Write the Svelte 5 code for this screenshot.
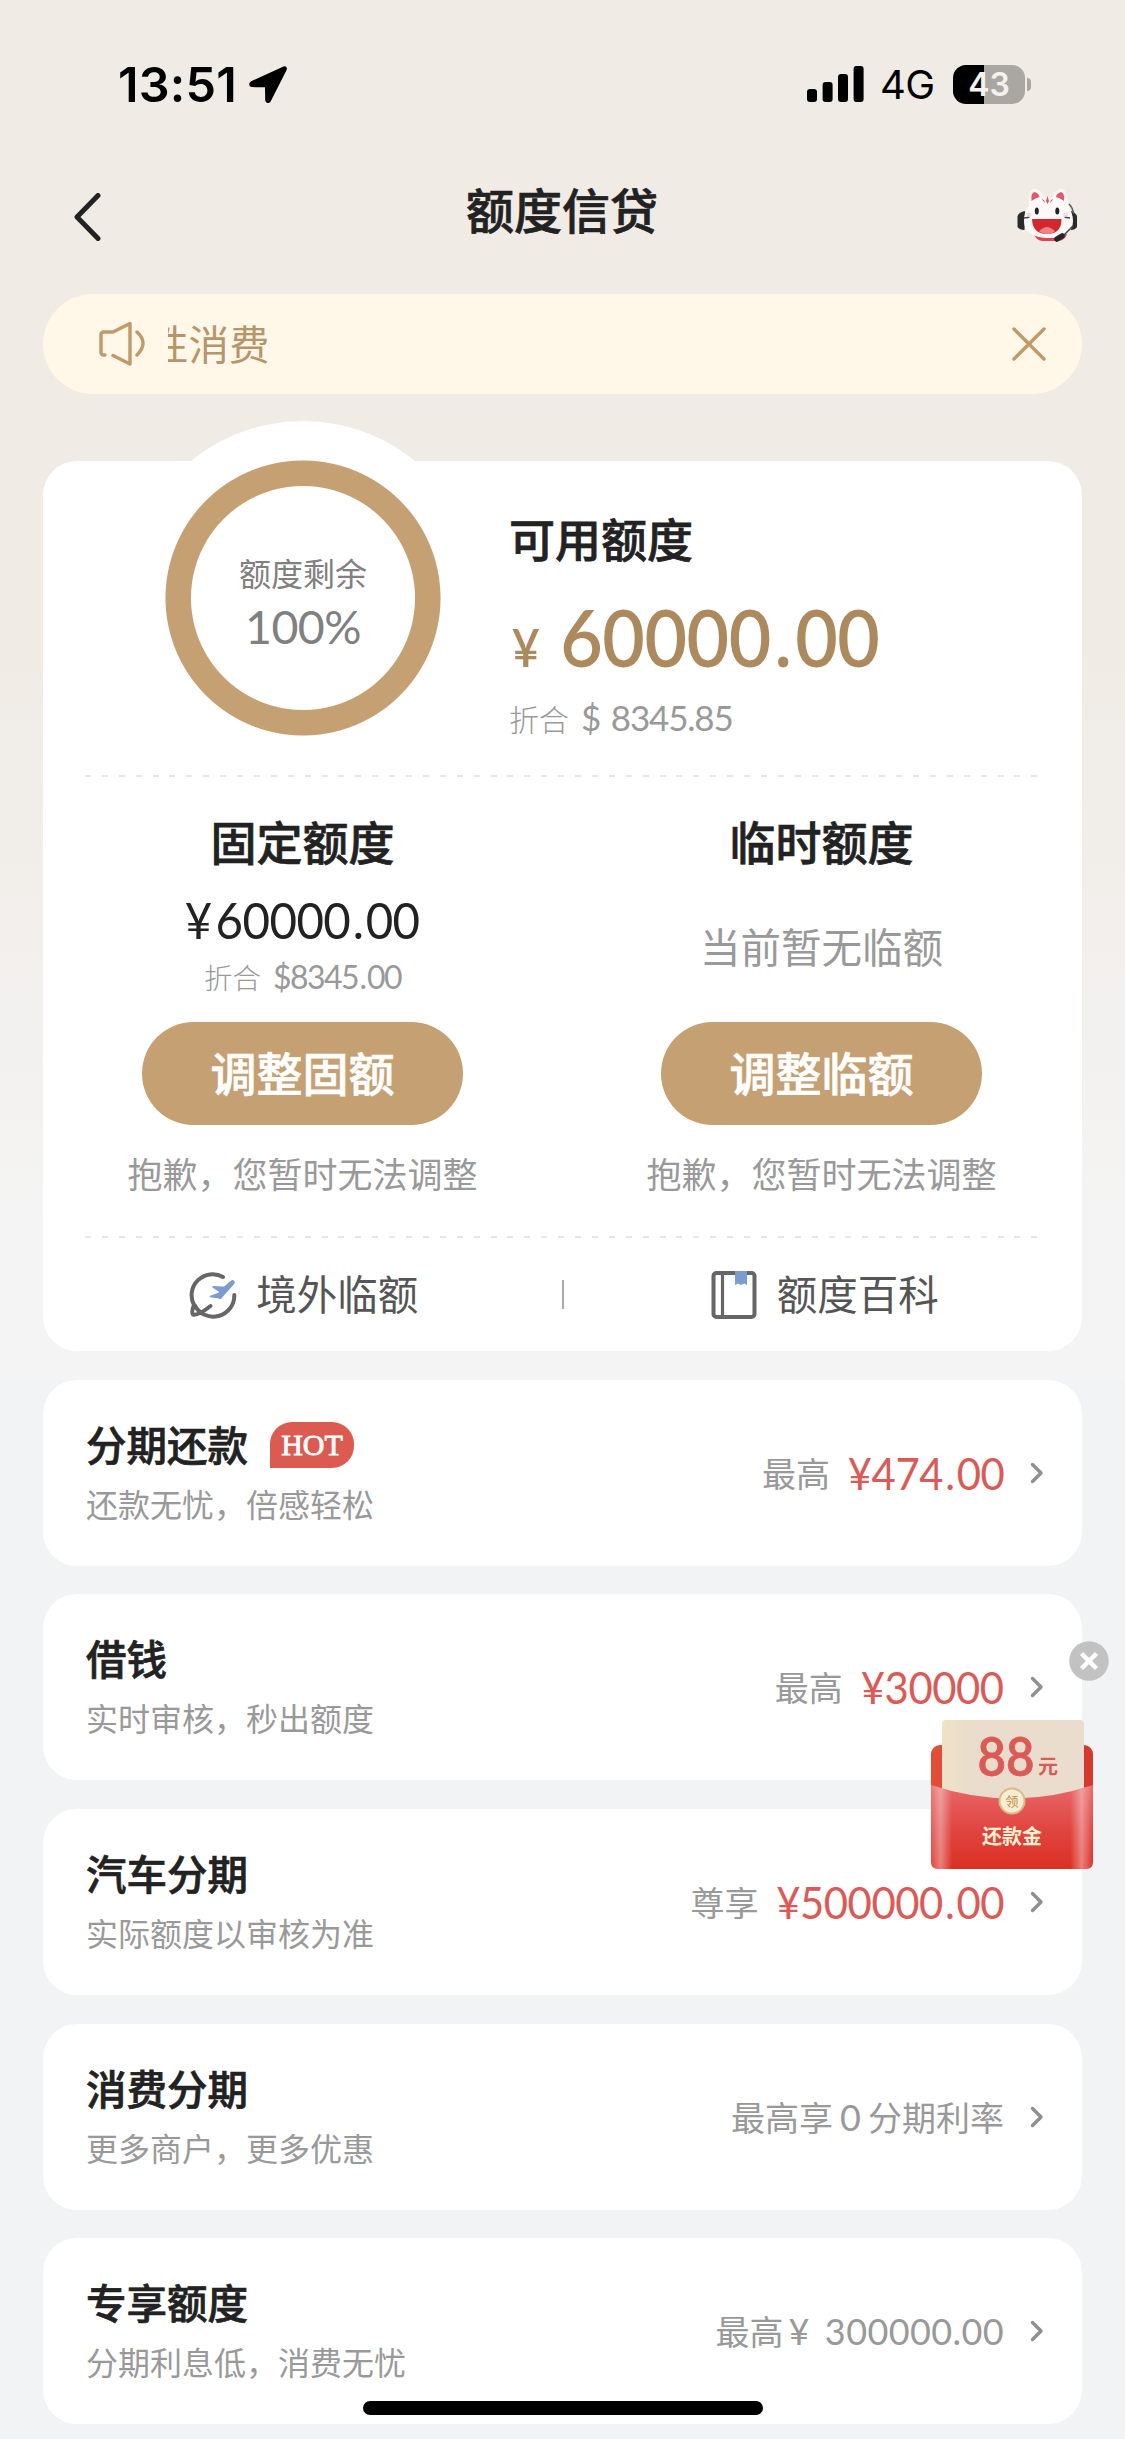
<script>
  const products = [
    { title: '分期还款', note: '还款无忧，倍感轻松', lead: '最高', amount: '¥474.00', hot: true },
    { title: '借钱', note: '实时审核，秒出额度', lead: '最高', amount: '¥30000' },
    { title: '汽车分期', note: '实际额度以审核为准', lead: '尊享', amount: '¥500000.00' },
    { title: '消费分期', note: '更多商户，更多优惠', rate: '0' },
    { title: '专享额度', note: '分期利息低，消费无忧', plain: '300000.00' }
  ];
  // Condensed figures keep their full layout width, so longer amounts need a smaller gap.
  const gapFor = (amount) => 18 - 1.75 * amount.length;
</script>

{#snippet figure(text)}
  {#each [...text] as ch}<span class={ch === '.' ? 'dot' : ch === '¥' ? 'yen' : ''}>{ch}</span>{/each}
{/snippet}

<div class="page">
  <div class="status">
    <span class="time">13:51</span>
    <svg class="locate" viewBox="0 0 38 37"><path d="M34.500.6 2.200 15.200C-.8 16.800-.4 21 3 21.100l13 .2.2 12.800c.1 3.400 4.300 3.800 5.700.8L37.600 4C38.600 1.500 36.800-.4 34.500.6Z" /></svg>
    <span class="grow"></span>
    <svg class="signal" viewBox="0 0 57 36">
      <rect x="0" y="23" width="10" height="13" rx="3" />
      <rect x="15.600" y="16" width="10" height="20" rx="3" />
      <rect x="31" y="8" width="10" height="28" rx="3" />
      <rect x="46.600" y="0" width="10" height="36" rx="3" />
    </svg>
    <span class="net">4G</span>
    <div class="battery">43</div>
    <i class="nub"></i>
  </div>

  <header>
    <svg class="back" viewBox="0 0 28 48"><path d="M25 2.500 4 24 25 45.500" /></svg>
    <h1>额度信贷</h1>
    <svg class="mascot" viewBox="0 0 60 56">
      <path d="M17 46h33q-2 6-8 7H25q-6-1-8-7Z" fill="#dd4556" />
      <path d="M8 23Q2 24 .5 28v11q2 3 7 3Z" fill="#2b2b2e" />
      <path d="M54 23q4 1 6 5v11q-2 3-6 3Z" fill="#2b2b2e" />
      <path d="M52 16q4 4 4.500 10" fill="none" stroke="#55555a" stroke-width="1.500" />
      <path d="M12 17Q11 1 18 1q6 1 9 8h9q2-7 8-8 6 0 7 17 5 7 5 15c0 11-9 17-23.500 17S7 45 7 33q0-9 5-16Z" fill="#fdf9f8" />
      <path d="M14.500 13q-1-8 3-9 4 1 5 5-4 1-8 4Zm32.500 0q1-8-3-9-5 2-5 5 4 1 8 4Z" fill="#e8566a" />
      <path d="m30.500 8 1.500 5-1.500 3-1.500-3Zm-6 3 2.500 1 1 3Zm12 0-2.500 1-1 3Z" fill="#e35064" />
      <ellipse cx="19.800" cy="23" rx="2" ry="3.600" fill="#222" /><ellipse cx="40.300" cy="23" rx="2" ry="3.600" fill="#222" />
      <circle cx="12" cy="27" r="2.300" fill="#ffd3d8" /><circle cx="48.500" cy="27" r="2.300" fill="#ffd3d8" />
      <path d="M15 31h29.500q0 15-14.500 15T15 31Z" fill="#d2282d" />
      <path d="M22 43.500q8-9 16 0-8 5-16 0Z" fill="#ef8187" />
      <path d="M7 30q5-1 5 0M53 30q-5-1-5 0M56 38 46 48" fill="none" stroke="#44444a" stroke-width="1.500" />
      <path d="m40 51 5-3" stroke="#242428" stroke-width="5.500" stroke-linecap="round" />
    </svg>
  </header>

  <div class="notice">
    <svg class="horn" viewBox="0 0 47 44"><path d="M6 33H4.500A2.500 2.500 0 0 1 2 30.500V12.500A2.500 2.500 0 0 1 4.500 10H14L31 1.500V42L14 33.500M38 10q12 11 0 23" /></svg>
    <div class="ticker"><span>性消费</span></div>
    <svg class="shut" viewBox="0 0 34 34"><path d="m2 2 30 30M32 2 2 32" /></svg>
  </div>

  <main class="quota">
    <section class="top">
      <div class="ring"><span class="left">额度剩余</span><span class="pct">100%</span></div>
      <div class="avail">
        <h2>可用额度</h2>
        <div class="big"><span class="sign">¥</span>{@render figure('60000.00')}</div>
        <div class="usd"><span class="cn">折合</span>$ 8345.85</div>
      </div>
    </section>
    <div class="dash"></div>
    <section class="cols">
      <div class="col">
        <h2>固定额度</h2>
        <div class="mid">{@render figure('¥60000.00')}</div>
        <div class="usd small"><span class="cn">折合</span><span class="num">{@render figure('$8345.00')}</span></div>
        <button>调整固额</button>
        <p>抱歉，您暂时无法调整</p>
      </div>
      <div class="col">
        <h2>临时额度</h2>
        <div class="none">当前暂无临额</div>
        <button>调整临额</button>
        <p>抱歉，您暂时无法调整</p>
      </div>
    </section>
    <div class="dash"></div>
    <section class="links">
      <div class="link">
        <svg viewBox="0 0 48 50">
          <path d="M34 7A21 21 0 0 0 5 35Q2 42 4 44.500 9 46 21.500 36M5.500 35A21 21 0 0 0 45.300 25" fill="none" stroke="#666" stroke-width="4" stroke-linecap="round" stroke-linejoin="round" />
          <path d="M43.500 12.500 31 26.500M42 13.500 32 23" fill="none" stroke="#7b9ccc" stroke-width="4.600" stroke-linecap="round" />
          <path d="M24 16.800 38 17.500 32 22.500ZM21.500 26.500 31 23l1 5Z" fill="#7b9ccc" stroke="#7b9ccc" stroke-width="1.500" stroke-linejoin="round" />
        </svg>
        <span>境外临额</span>
      </div>
      <i></i>
      <div class="link">
        <svg viewBox="0 0 48 50">
          <rect x="3.500" y="3" width="41" height="44" rx="3" fill="none" stroke="#666" stroke-width="4" /><path d="M12.500 3v44" stroke="#666" stroke-width="3.200" />
          <path d="M25 1h12v14l-3-1.500-3 1.500-3-1.500-3 1.500Z" fill="#7b9ccc" />
        </svg>
        <span>额度百科</span>
      </div>
    </section>
  </main>

  {#each products as p}
    <section class="product">
      <div class="info">
        <h3>{p.title}{#if p.hot}<span class="hot">HOT</span>{/if}</h3>
        <div class="note">{p.note}</div>
      </div>
      {#if p.amount}
        <div class="worth" style:gap="{gapFor(p.amount)}px"><span class="lead">{p.lead}</span><span class="amount">{@render figure(p.amount)}</span></div>
      {:else if p.rate}
        <span class="lead rate">最高享<b>{p.rate}</b>分期利率</span>
      {:else}
        <span class="lead plain">最高<b class="y">¥</b><b>{p.plain}</b></span>
      {/if}
      <svg class="chev" viewBox="0 0 14 22"><path d="m2.500 2.500 8.500 8.500-8.500 8.500" /></svg>
    </section>
  {/each}

  <div class="promo">
    <svg class="x" viewBox="0 0 40 40"><circle cx="20" cy="20" r="19.800" fill="#c2c2c2" /><path d="m12.500 12.500 15 15M27.500 12.500l-15 15" stroke="#fff" stroke-width="4.500" /></svg>
    <svg class="packet" viewBox="0 0 162 150">
      <defs>
        <linearGradient id="pback"><stop offset="0" stop-color="#e24f36" /><stop offset="1" stop-color="#d6372f" /></linearGradient>
        <linearGradient id="ppaper"><stop offset="0" stop-color="#f0e2c8" /><stop offset=".2" stop-color="#eadccb" /><stop offset="1" stop-color="#eaddcf" /></linearGradient>
        <linearGradient id="pfront" x2="0" y2="1"><stop offset="0" stop-color="#e8686a" /><stop offset=".55" stop-color="#e0443f" /><stop offset="1" stop-color="#db3024" /></linearGradient>
        <linearGradient id="pshine"><stop offset="0" stop-color="#fff" stop-opacity=".12" /><stop offset=".06" stop-color="#fff" stop-opacity=".38" /><stop offset=".13" stop-color="#fff" stop-opacity="0" /><stop offset=".86" stop-color="#fff" stop-opacity="0" /><stop offset=".93" stop-color="#fff" stop-opacity=".38" /><stop offset="1" stop-color="#fff" stop-opacity="0" /></linearGradient>
      </defs>
      <rect y="25" width="162" height="80" rx="9" fill="url(#pback)" />
      <rect x="11" width="142" height="92" rx="4" fill="url(#ppaper)" />
      <path d="M0 65q81 27 162 0v77q0 7-7 7H7q-7 0-7-7Z" fill="url(#pfront)" />
      <path d="M0 65q81 27 162 0v77q0 7-7 7H7q-7 0-7-7Z" fill="url(#pshine)" />
      <circle cx="81" cy="81" r="12.500" fill="#f9ecd4" stroke="#dcba83" stroke-width="2" />
      <text x="81" y="86" text-anchor="middle" class="coin">领</text>
      <text x="46.500" y="55.500" class="n88" textLength="57" lengthAdjust="spacingAndGlyphs">88</text>
      <text x="107" y="54" class="yuan">元</text>
      <text x="81" y="123.500" text-anchor="middle" class="cash">还款金</text>
    </svg>
  </div>
  <div class="home"></div>
</div>

<style>
  :global(body) { margin: 0; background: #f2f3f5; }
  .page {
    position: relative; box-sizing: border-box; width: 1125px; height: 2439px; overflow: hidden;
    padding: 0 43px; color: #222;
    background: linear-gradient(#f0ebe5 0, #f0ebe5 650px, #f4f4f4 1230px, #f4f4f4 1380px, #f2f3f5 1380px);
    font-family: "Noto Sans CJK SC", sans-serif;
  }
  h1, h2, h3, p { margin: 0; }
  h1, h2, h3, button { -webkit-text-stroke: .7px currentColor; }
  .status { display: flex; align-items: center; height: 168px; padding: 0 51px 0 75px; font-family: Inter, sans-serif; color: #000; }
  .time { width: 131px; font-size: 48.500px; font-weight: 600; letter-spacing: .2px; }
  .locate { width: 38px; height: 37px; }
  .grow { flex: 1; }
  .signal { width: 57px; height: 36px; margin-right: 16px; }
  .net { width: 73px; font-size: 40px; font-weight: 400; letter-spacing: -.5px; }
  .battery {
    width: 72px; height: 39px; line-height: 39px; border-radius: 13px; text-align: center; color: #f4f1ee;
    font-size: 32px; font-weight: 600; background: linear-gradient(90deg, #000 43%, #aaa6a2 43%);
  }
  .nub { width: 4px; height: 13px; margin-left: 2px; border-radius: 0 4px 4px 0; background: #aaa6a2; }
  header { display: grid; grid-template-columns: 1fr auto 1fr; align-items: center; height: 92px; padding: 4px 5px 0 30px; box-sizing: border-box; }
  .back { width: 28px; height: 48px; margin-top: 2px; }
  .back path { fill: none; stroke: #222; stroke-width: 5; stroke-linecap: round; stroke-linejoin: round; }
  h1 { font-size: 48px; line-height: 60px; font-weight: 500; margin: 0 26px 16px 0; }
  .mascot { width: 60px; height: 56px; justify-self: end; }
  .notice { display: flex; align-items: center; box-sizing: border-box; height: 100px; margin-top: 34px; padding: 0 36px 0 56px; border-radius: 50px; background: #fff7e8; }
  .horn { width: 47px; height: 44px; }
  .horn path, .shut path { fill: none; stroke: #c09a6a; stroke-width: 3.400; stroke-linejoin: round; stroke-linecap: round; }
  .ticker { flex: 1; display: flex; margin-left: 22px; overflow: hidden; color: #b8946a; font-size: 40.500px; line-height: 60px; padding-bottom: 2px; }
  .ticker span { margin-left: -20px; }
  .shut { width: 34px; height: 34px; }
  .quota { height: 890px; margin-top: 67px; border-radius: 34px; background: #fff; }
  .top { display: flex; height: 314px; padding-left: 83px; }
  .ring {
    flex: none; display: flex; flex-direction: column; align-items: center; box-sizing: border-box; width: 354px; height: 354px; margin: -40px 29px 0 0;
    padding-top: 129px; border-radius: 50%; color: #808080;
    background: radial-gradient(circle, #fff 111.500px, #c5a073 112.500px, #c5a073 137px, #fff 138px);
  }
  .left { font-size: 32px; line-height: 44px; }
  .pct { margin-top: 2px; font: 400 46.500px/60px Lato, sans-serif; letter-spacing: -.5px; }
  .avail { padding-top: 43px; }
  h2 { font-size: 46px; line-height: 66px; font-weight: 500; }
  .big { display: flex; align-items: baseline; width: 420px; height: 96px; margin-top: 19px; color: #ad8a5e; font: 600 79px/96px Lato, sans-serif; letter-spacing: -.5px; transform: scaleX(.93); transform-origin: left; }
  .sign { width: 52px; padding-left: 3px; font-size: 52px; }
  .dot { margin: 0 .05em; }
  .usd { display: flex; align-items: baseline; margin-top: 7px; color: #999; font: 400 35px/50px Lato, sans-serif; letter-spacing: -1.200px; word-spacing: 3px; }
  .usd .cn { margin-right: 12px; font: 300 30px/50px "Noto Sans CJK SC", sans-serif; letter-spacing: 0; }
  .dash { height: 2px; margin: 0 44px 0 42px; background: repeating-linear-gradient(90deg, #e6e6e6 0 6px, transparent 6px 16.900px); }
  .cols { display: grid; grid-template-columns: 1fr 1fr; height: 459px; padding-right: 1px; }
  .col { display: flex; flex-direction: column; align-items: center; padding-top: 30px; }
  .mid { display: flex; height: 64px; margin-top: 15px; font: 400 51px/64px Lato, sans-serif; letter-spacing: -.600px; transform: scaleX(.93); }
  .mid .yen { margin-right: 4px; }
  .small { margin-top: 0; font-size: 32px; height: 46px; }
  .small .cn { margin-right: 12px; font-size: 28.500px; }
  .num { letter-spacing: -1.600px; }
  .none { height: 125px; line-height: 145px; color: #999; font-size: 40.500px; }
  button { width: 321px; height: 103px; margin-top: 24px; border: 0; border-radius: 52px; background: #c5a073; color: #fff; font: 500 46px/98px "Noto Sans CJK SC", sans-serif; padding: 0 0 5px; }
  p { margin-top: 22px; color: #999; font-size: 35px; line-height: 52px; }
  .links { display: grid; grid-template-columns: 1fr 2px 1fr; align-items: center; height: 113px; }
  .links i { height: 29px; background: #aaa; }
  .link { display: flex; align-items: center; justify-content: center; gap: 19px; padding-left: 3px; color: #555; font-size: 40.500px; line-height: 60px; }
  .link span { margin-bottom: 4px; }
  .link svg { width: 48px; height: 50px; }
  .product { display: flex; align-items: center; box-sizing: border-box; height: 186px; margin-top: 28.700px; padding: 0 38px 0 43px; border-radius: 34px; background: #fff; }
  .info { flex: 1; }
  h3 { display: flex; align-items: center; font-size: 40.500px; line-height: 60px; font-weight: 500; }
  .hot { width: 84px; height: 46px; margin: 3px 0 0 22px; border-radius: 22px 22px 22px 0; background: #dc5b50; color: #fff; text-align: center; font: 400 30px/46px "Liberation Serif", serif; -webkit-text-stroke: .8px #fff; }
  .note { color: #999; font-size: 32px; line-height: 58px; }
  .lead { color: #999; font-size: 34px; line-height: 50px; }
  .worth { display: flex; align-items: center; }
  .amount { display: flex; color: #dc5a56; font: 400 45px/54px Lato, sans-serif; letter-spacing: -.5px; transform: scaleX(.93); transform-origin: right; }
  .rate, .plain { display: flex; align-items: baseline; }
  .lead b { font: 400 36px/50px Lato, sans-serif; margin: 0 7px; }
  .lead .y { margin-right: 10px; }
  .plain b { margin-right: 0; margin-left: 5px; letter-spacing: .4px; }
  .chev { width: 14px; height: 22px; margin-left: 26px; }
  .chev path { fill: none; stroke: #909090; stroke-width: 3.500; stroke-linecap: round; stroke-linejoin: round; }
  .promo { position: absolute; top: 1641px; right: 16px; width: 178px; display: flex; flex-direction: column; }
  .x { width: 40px; height: 40px; align-self: flex-end; }
  .packet { width: 162px; height: 150px; margin-top: 39px; }
  .n88 { font: 600 53px Lato, sans-serif; fill: #dc5a56; stroke: #dc5a56; stroke-width: .8px; }
  .yuan { font: 700 20px "Noto Sans CJK SC", sans-serif; fill: #dc5a56; }
  .cash { font: 700 20px "Noto Sans CJK SC", sans-serif; fill: #fff0d2; }
  .coin { font: 400 13px "Noto Sans CJK SC", sans-serif; fill: #c09047; }
  .home { position: absolute; left: 363px; bottom: 24px; width: 400px; height: 14px; border-radius: 7px; background: #000; }
</style>
